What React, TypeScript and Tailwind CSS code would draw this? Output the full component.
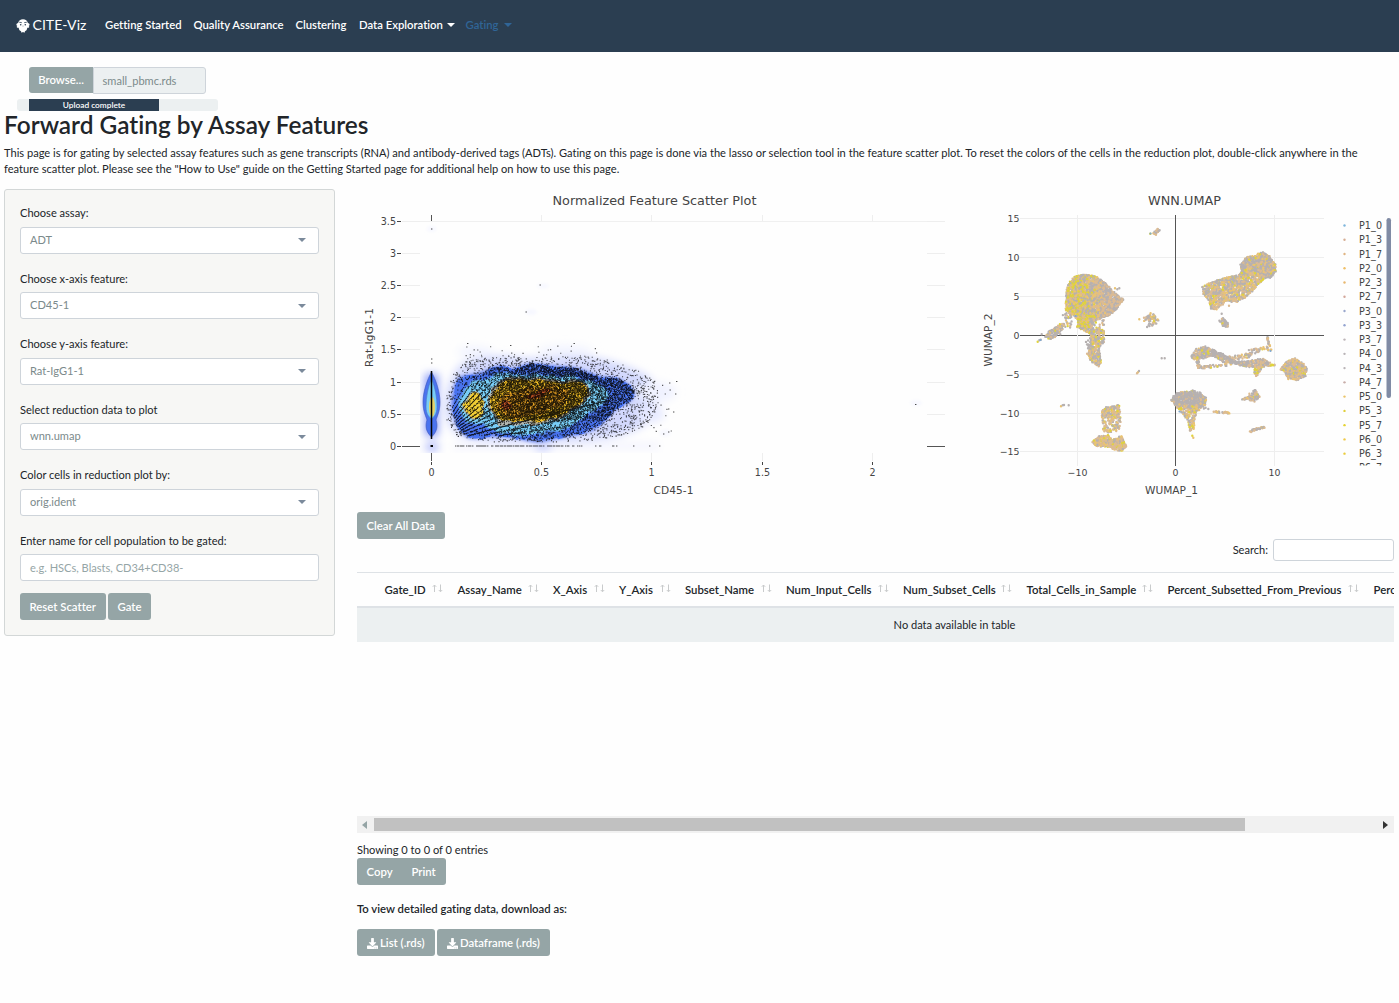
import React from 'react';
import { FaDownload } from 'react-icons/fa';

type Pt = [number, number];

function createRandom(seed: number) {
  let s = seed >>> 0;
  return () => {
    s = (s + 0x6d2b79f5) >>> 0;
    let t = s;
    t = Math.imul(t ^ (t >>> 15), t | 1);
    t ^= t + Math.imul(t ^ (t >>> 7), t | 61);
    return ((t ^ (t >>> 14)) >>> 0) / 4294967296;
  };
}

function inside(x: number, y: number, poly: Pt[]) {
  let hit = false;
  for (let i = 0, j = poly.length - 1; i < poly.length; j = i++) {
    const [xi, yi] = poly[i];
    const [xj, yj] = poly[j];
    if (yi > y !== yj > y && x < ((xj - xi) * (y - yi)) / (yj - yi) + xi) hit = !hit;
  }
  return hit;
}

function smooth(poly: Pt[]) {
  const n = poly.length;
  let d = '';
  for (let i = 0; i < n; i++) {
    const a = poly[i];
    const b = poly[(i + 1) % n];
    const mx = (a[0] + b[0]) / 2;
    const my = (a[1] + b[1]) / 2;
    d += i === 0 ? `M${mx} ${my}` : `Q${a[0]} ${a[1]} ${mx} ${my}`;
  }
  const f = poly[0];
  const g = poly[1];
  return d + `Q${f[0]} ${f[1]} ${(f[0] + g[0]) / 2} ${(f[1] + g[1]) / 2}Z`;
}

/* ---------- Feature scatter ---------- */

const HALO: Pt[] = [[446, 420], [445, 396], [452, 376], [462, 362], [480, 358], [500, 355], [530, 359], [560, 356], [590, 356], [615, 362], [636, 370], [652, 378], [658, 392], [656, 412], [646, 425], [626, 434], [600, 440], [540, 443], [490, 442], [457, 437]];
const BLUE: Pt[] = [[452, 412], [453, 394], [458, 377], [472, 376], [488, 371], [500, 365], [512, 371], [530, 363], [550, 367], [575, 368], [588, 373], [600, 378], [618, 378], [634, 390], [633, 399], [614, 409], [606, 419], [594, 430], [572, 435], [556, 438], [535, 442], [518, 437], [490, 435], [470, 439], [460, 430]];
const SKY: Pt[] = [[460, 412], [462, 394], [470, 382], [486, 380], [504, 374], [530, 375], [552, 375], [578, 378], [592, 383], [606, 389], [607, 398], [594, 408], [582, 418], [566, 428], [545, 432], [528, 436], [510, 432], [494, 433], [484, 423], [476, 425], [466, 422]];
const YELLOW_A: Pt[] = [[464, 410], [467, 398], [475, 391], [483, 398], [484, 410], [479, 419], [470, 419]];
const YELLOW_B: Pt[] = [[487, 404], [492, 391], [504, 379], [516, 378], [532, 380], [560, 382], [580, 381], [591, 391], [583, 403], [570, 413], [550, 422], [530, 423], [508, 422], [496, 420]];
const ORANGE: Pt[] = [[494, 405], [504, 395], [530, 386], [556, 385], [572, 391], [566, 401], [548, 412], [524, 418], [504, 416]];

function scatterDots() {
  const r = createRandom(71);
  const parts: string[] = [];
  const gray: string[] = [];
  const put = (x: number, y: number, w = 1) =>
    parts.push(`M${(Math.round(x * 3) / 3).toFixed(2)} ${(Math.round(y * 3) / 3).toFixed(2)}h${w}`);
  const ox = 431.5;
  const oy = 446;
  const rays = [0.16, 0.215, 0.285, 0.37, 0.46, 0.55, 0.64, 0.74, 0.85, 0.97, 1.1, 1.25, 1.42, 1.65, 1.9];
  // Counts ratio rays: solid near the origin, dissolving to the right.
  rays.forEach((k, i) => {
    const strong = k === 0.285;
    const start = k < 0.17 ? 495 : k < 0.25 ? 484 : strong ? 467 : 448;
    const end = strong ? 608 : k < 0.25 ? 585 : 560 - i * 4;
    for (let x = start; x < end; x += 0.5) {
      const y = oy - k * (x - ox) * (1 - (x - ox) / 1800);
      if (!inside(x, y, BLUE) && (!inside(x, y, HALO) || r() > 0.15)) continue;
      const gone = (x - 450) / (end - 440);
      if (r() > 0.95 - gone * (strong ? 0.1 : 0.6)) continue;
      // Fewer counts at the top left leave the streaks broken.
      if (y < 384 && r() < 0.45) continue;
      put(x, y + (r() - 0.5) * (strong ? 0.9 : 0.6 + gone));
    }
  });
  // Interior scatter, tightening towards the centre.
  let n = 0;
  while (n < 10800) {
    const x = 450 + r() * 186;
    const y = 362 + r() * 80;
    if (!inside(x, y, BLUE)) continue;
    const t = Math.min(1, Math.max(0, (x - 466) / 58));
    const upper = Math.min(1, Math.max(0, (396 - y) / 26));
    const lower = y > 420 ? 0.5 : 1;
    const core = inside(x, y, YELLOW_B) ? 1 : 0.6;
    n += 0.5;
    if (r() > (0.05 + 0.95 * t) * core * lower + upper * 0.2) continue;
    put(x, y);
    n += 0.5;
  }
  // Fringe around the cloud.
  n = 0;
  while (n < 820) {
    const x = 446 + r() * 212;
    const y = 352 + r() * 90;
    if (!inside(x, y, HALO) || inside(x, y, BLUE)) continue;
    gray.push(`M${x.toFixed(1)} ${y.toFixed(1)}h1.1`);
    n++;
  }
  for (let i = 0; i < 70; i++) {
    const x = 600 + Math.pow(r(), 1.3) * 74;
    const y = 378 + r() * 54;
    gray.push(`M${x.toFixed(1)} ${y.toFixed(1)}h1.1`);
  }
  for (let i = 0; i < 50; i++) {
    gray.push(`M${(458 + r() * 140).toFixed(1)} ${(346 + r() * 18).toFixed(1)}h1.1`);
  }
  for (let i = 0; i < 125; i++) {
    const x = 454 + Math.round(r() * (r() < 0.8 ? 130 : 165));
    gray.push(`M${x} 446h1.4`);
  }
  const lone: Pt[] = [[431, 229], [539.5, 285], [525.5, 312], [431, 359], [431, 363], [467, 343.5], [510, 345.5], [573.5, 343.5], [653, 383], [669, 383], [676, 381.5], [675, 394], [669.5, 390], [673, 412], [668, 409], [654, 412], [915, 404.5], [663, 434], [668, 432], [659, 446], [649, 446], [633, 446]];
  lone.forEach(([x, y]) => gray.push(`M${x} ${y}h1.4`));
  return { black: parts.join(''), gray: gray.join('') };
}

const DOTS = scatterDots();

const PLOT_FONT = "font-['DejaVu_Sans',Verdana,sans-serif]";

function ScatterPlot() {
  const ys = ['3.5', '3', '2.5', '2', '1.5', '1', '0.5', '0'];
  const xs = ['0', '0.5', '1', '1.5', '2'];
  return (
    <svg viewBox="357 184 620 322" width="620" height="322" className={`block shrink-0 ${PLOT_FONT}`} fill="#444">
      <defs>
        <filter id="soft" x="-20%" y="-20%" width="140%" height="140%">
          <feGaussianBlur stdDeviation="4" />
        </filter>
        <filter id="edge" x="-20%" y="-20%" width="140%" height="140%">
          <feGaussianBlur stdDeviation="1.6" />
        </filter>
        <filter id="rough" x="-10%" y="-10%" width="120%" height="120%">
          <feTurbulence type="fractalNoise" baseFrequency="0.09" numOctaves="2" seed="4" />
          <feDisplacementMap in="SourceGraphic" scale="9" xChannelSelector="R" yChannelSelector="G" />
        </filter>
        <clipPath id="heat">
          <rect x="420" y="216" width="508" height="237" />
        </clipPath>
      </defs>
      <text x="552.5" y="205" fontSize="12.8" textLength="204">Normalized Feature Scatter Plot</text>
      {ys.map((t, i) => {
        const y = Math.round(221 + i * 32.1) + 0.5;
        return (
          <g key={t}>
            <text x="396" y={y + 3.7} fontSize="9.6" textAnchor="end">{t}</text>
            <path d={`M397 ${y}h4`} stroke="#444" />
            <path d={`M402 ${y}h18M927 ${y}h18`} stroke={t === '0' ? '#555' : '#eee'} />
          </g>
        );
      })}
      <path d="M420 221.500h507" stroke="#f0f0f0" />
      {xs.map((t, i) => {
        const x = Math.round(431 + i * 110.2) + 0.5;
        return (
          <g key={t}>
            <text x={x} y="476" fontSize="9.6" textAnchor="middle">{t}</text>
            <path d={`M${x} 462v3`} stroke="#444" />
            <path d={`M${x} 215v6M${x} 453v8`} stroke={t === '0' ? '#555' : '#eee'} />
          </g>
        );
      })}
      <text x="653.5" y="493.500" fontSize="10.600" textLength="40">CD45-1</text>
      <text transform="translate(373 367) rotate(-90)" fontSize="10.600" textLength="59">Rat-IgG1-1</text>

      <g clipPath="url(#heat)">
        <g filter="url(#soft)">
          <path d={smooth(HALO)} fill="#d2d8fd" />
          <ellipse cx="656" cy="392" rx="20" ry="10" fill="#f0f2ff" />
          <ellipse cx="650" cy="414" rx="14" ry="9" fill="#e6e9ff" />
          <ellipse cx="475" cy="352" rx="18" ry="6" fill="#f2f4ff" />
          <ellipse cx="565" cy="350" rx="28" ry="5" fill="#f2f4ff" />
          <rect x="454" y="443" width="205" height="6" fill="#f2f3ff" />
          <ellipse cx="543" cy="447" rx="9" ry="4" fill="#c6cdfc" />
          <rect x="425" y="374" width="13" height="62" fill="#8798f8" />
          <ellipse cx="432" cy="447" rx="7" ry="4" fill="#a4aff9" />
        </g>
        <g fill="#f7f8ff" filter="url(#edge)">
          <ellipse cx="431.500" cy="229" rx="5" ry="3" />
          <ellipse cx="543" cy="286" rx="6" ry="2.500" />
          <ellipse cx="531" cy="312" rx="6" ry="3" />
          <ellipse cx="916" cy="403" rx="6" ry="3" />
          <ellipse cx="665" cy="433" rx="6" ry="3.500" />
        </g>
        <path d={smooth(BLUE)} fill="#4b6fee" stroke="#4b6fee" strokeWidth="3" filter="url(#edge)" opacity=".7" />
        <g filter="url(#rough)">
          <path d={smooth(BLUE)} fill="#4a73ef" />
          <path d={smooth(SKY)} fill="#5c96f2" stroke="#5c96f2" strokeWidth="3" />
          <path d={smooth(SKY)} fill="#78cdf7" stroke="#4f8fe0" strokeWidth=".4" />
          <path d={smooth(YELLOW_A)} fill="#f1cd35" stroke="#b3b29a" strokeWidth="1.400" />
          <path d={smooth(YELLOW_B)} fill="#f1bf28" stroke="#b0b0a4" strokeWidth="2.500" />
          <path d="M496 421L515 420L530 423L510 427L497 427Z" fill="#b3b7b2" />
          <path d={smooth(ORANGE)} fill="#e5a022" />
          <ellipse cx="506" cy="406" rx="5" ry="4" fill="#cf5a2a" />
          <ellipse cx="539" cy="394" rx="12" ry="3.500" fill="#cf5a25" transform="rotate(-15 539 394)" />
        </g>
        <path d="M431.500 372C427 380 423 392 423 402C423 412 426 416 427 420C425 426 426 432 431.500 437C437 432 438 426 436 420C437 416 440 412 440 402C440 392 436 380 431.500 372Z" fill="#4a73ef" stroke="#3d55b8" strokeWidth=".6" />
        <path d="M431.500 378C428 388 426 396 426 407C426 414 429 417 431.500 419C434 417 437 414 437 407C437 396 435 388 431.500 378Z" fill="#78cdf7" stroke="#4876c4" strokeWidth=".6" />
        <ellipse cx="432" cy="407" rx="3" ry="10" fill="#e5d268" />
        <path d="M431.500 371V439" stroke="#000" strokeWidth="1.500" />
        <path d={DOTS.black} stroke="#050505" strokeWidth="1" opacity=".88" />
        <path d={DOTS.gray} stroke="#111" strokeWidth="1.1" opacity=".75" />
        <path d="M430.500 446h2.500" stroke="#000" strokeWidth="2" />
      </g>
    </svg>
  );
}

/* ---------- UMAP ---------- */

interface Cluster {
  poly: Pt[];
  density: number;
  mix: (x: number, y: number) => [number, number, number, number];
}

// Weights: gray, tan, orange, yellow.
const even = (): [number, number, number, number] => [0.5, 0.26, 0.16, 0.08];

const CLUSTERS: Cluster[] = [
  { poly: [[275, 320], [283, 295], [300, 275], [325, 268], [360, 274], [385, 290], [410, 315], [443, 345], [425, 370], [400, 392], [360, 400], [350, 425], [352, 450], [330, 437], [308, 425], [308, 400], [290, 385], [273, 375]], density: 1.1,
    mix: (x) => { const t = Math.min(1, Math.max(0, (x - 310) / 90)); return [0.34 + 0.22 * t, 0.2 + 0.24 * t, 0.16 - 0.04 * t, 0.3 - 0.27 * t]; } },
  { poly: [[400, 392], [385, 425], [350, 445], [360, 400]], density: 0.2, mix: even },
  { poly: [[345, 440], [372, 430], [387, 440], [385, 470], [370, 490], [378, 530], [370, 543], [350, 530], [338, 505], [348, 490], [350, 460]], density: 0.8, mix: () => [0.45, 0.28, 0.15, 0.12] },
  { poly: [[330, 470], [348, 455], [350, 500], [338, 500]], density: 0.3, mix: () => [0.75, 0.1, 0.05, 0.1] },
  { poly: [[268, 392], [290, 388], [290, 430], [268, 430]], density: 0.22, mix: () => [0.7, 0.15, 0.1, 0.05] },
  { poly: [[211, 455], [225, 437], [255, 420], [267, 417], [262, 432], [240, 455], [225, 462]], density: 0.7, mix: () => [0.6, 0.25, 0.08, 0.07] },
  { poly: [[536, 145], [548, 131], [553, 136], [542, 149]], density: 0.5, mix: () => [0.5, 0.4, 0.1, 0] },
  { poly: [[515, 392], [525, 383], [550, 392], [552, 410], [535, 422], [514, 429], [522, 415], [507, 408]], density: 0.4, mix: even },
  { poly: [[380, 680], [395, 668], [430, 662], [436, 690], [437, 720], [428, 742], [385, 742], [382, 715]], density: 0.36, mix: () => [0.38, 0.33, 0.2, 0.09] },
  { poly: [[383, 676], [395, 668], [432, 662], [434, 688], [383, 690]], density: 0.5, mix: () => [0.35, 0.35, 0.2, 0.1] },
  { poly: [[375, 755], [400, 752], [410, 765], [440, 755], [453, 783], [440, 798], [420, 792], [400, 784], [365, 784], [352, 770]], density: 1.1, mix: () => [0.18, 0.53, 0.2, 0.09] },
  { poly: [[590, 645], [605, 625], [630, 622], [655, 618], [675, 625], [692, 640], [690, 660], [670, 668], [640, 670], [600, 658]], density: 1.1, mix: () => [0.8, 0.13, 0.05, 0.02] },
  { poly: [[600, 658], [670, 665], [660, 690], [655, 730], [645, 738], [637, 700], [620, 680]], density: 0.6, mix: () => [0.34, 0.28, 0.22, 0.16] },
  { poly: [[797, 240], [815, 217], [840, 212], [865, 202], [883, 215], [900, 240], [900, 260], [885, 278], [855, 270], [800, 262]], density: 1.1, mix: () => [0.58, 0.25, 0.12, 0.05] },
  { poly: [[800, 262], [880, 270], [860, 288], [830, 318], [808, 338], [785, 350], [755, 345], [725, 372], [708, 372], [705, 350], [684, 325], [684, 305], [715, 290], [755, 277], [790, 272]], density: 0.7, mix: () => [0.44, 0.28, 0.16, 0.12] },
  { poly: [[734, 405], [745, 401], [759, 417], [757, 426], [745, 424]], density: 0.8, mix: () => [0.65, 0.2, 0.1, 0.05] },
  { poly: [[650, 513], [665, 494], [690, 485], [715, 495], [755, 515], [775, 530], [815, 530], [865, 522], [883, 535], [865, 545], [820, 545], [780, 537], [745, 530], [715, 512], [680, 520]], density: 0.75, mix: () => [0.68, 0.22, 0.07, 0.03] },
  { poly: [[840, 540], [868, 532], [852, 560], [845, 572], [838, 560]], density: 0.7, mix: () => [0.3, 0.37, 0.18, 0.15] },
  { poly: [[918, 553], [935, 530], [960, 522], [980, 534], [995, 550], [990, 572], [965, 584], [940, 580], [930, 560]], density: 1.1, mix: () => [0.46, 0.4, 0.1, 0.04] },
  { poly: [[825, 628], [845, 625], [852, 635], [840, 648], [826, 645]], density: 0.7, mix: () => [0.35, 0.35, 0.16, 0.14] },
];

const STREAKS: { line: Pt[]; n: number; spread: number }[] = [
  { line: [[652, 515], [668, 522], [670, 548], [715, 543], [765, 541]], n: 85, spread: 8 },
  { line: [[755, 520], [815, 515], [830, 500], [885, 488]], n: 80, spread: 15 },
  { line: [[877, 455], [880, 470], [887, 492]], n: 14, spread: 4 },
  { line: [[865, 538], [902, 542]], n: 16, spread: 5 },
  { line: [[800, 643], [828, 637]], n: 26, spread: 5 },
  { line: [[832, 615], [845, 625], [848, 640]], n: 12, spread: 12 },
  { line: [[715, 680], [765, 684]], n: 26, spread: 4 },
  { line: [[823, 740], [840, 733], [867, 727]], n: 36, spread: 5 },
  { line: [[645, 680], [690, 665]], n: 14, spread: 14 },
  { line: [[268, 395], [310, 380]], n: 20, spread: 16 },
];

const SINGLES: Pt[] = [[526, 146], [188, 470], [193, 466], [197, 464], [200, 448], [256, 448], [493, 403], [507, 398], [560, 520], [569, 520], [486, 565], [489, 562], [492, 558], [420, 310], [427, 313], [433, 310], [258, 664], [263, 661], [267, 660], [281, 661], [652, 752], [655, 758], [740, 386], [762, 362], [770, 350], [700, 672], [302, 398], [318, 398]];

const DOT_COLORS = ['#b6b1b1', '#dcbb93', '#e9c374', '#e0d33c'];
const LAYERS = 14;

function umapDots() {
  const r = createRandom(2024);
  const layers: string[] = Array.from({ length: LAYERS * 4 }, () => '');
  const put = (x: number, y: number, w: number[]) => {
    let k = r();
    let c = 0;
    while (c < 3 && k > w[c]) k -= w[c++];
    const slot = Math.floor(r() * LAYERS) * 4 + c;
    layers[slot] += `M${(975 + x / 3).toFixed(1)} ${(185 + y / 3).toFixed(1)}h.01`;
  };
  CLUSTERS.forEach(({ poly, density, mix }) => {
    const px = poly.map((p) => p[0]);
    const py = poly.map((p) => p[1]);
    const x0 = Math.min(...px);
    const x1 = Math.max(...px);
    const y0 = Math.min(...py);
    const y1 = Math.max(...py);
    const tries = ((x1 - x0) * (y1 - y0) * density) / 9;
    for (let i = 0; i < tries; i++) {
      const x = x0 + r() * (x1 - x0);
      const y = y0 + r() * (y1 - y0);
      if (inside(x, y, poly)) put(x, y, mix(x, y));
    }
    // Cells along the border keep the outline crisp.
    if (density > 0.45) {
      poly.forEach((a, i) => {
        const b = poly[(i + 1) % poly.length];
        const steps = Math.hypot(b[0] - a[0], b[1] - a[1]) / 6;
        for (let s = 0; s < steps; s++) {
          const t = s / steps;
          const x = a[0] + (b[0] - a[0]) * t + (r() - 0.5) * 4;
          const y = a[1] + (b[1] - a[1]) * t + (r() - 0.5) * 4;
          put(x, y, mix(x, y));
        }
      });
    }
  });
  STREAKS.forEach(({ line, n, spread }) => {
    for (let i = 0; i < n; i++) {
      const u = r() * (line.length - 1);
      const k = Math.floor(u);
      const t = u - k;
      put(
        line[k][0] + (line[k + 1][0] - line[k][0]) * t + (r() - 0.5) * spread,
        line[k][1] + (line[k + 1][1] - line[k][1]) * t + (r() - 0.5) * spread,
        even(),
      );
    }
  });
  SINGLES.forEach(([x, y]) => put(x, y, [0.5, 0.3, 0.15, 0.05]));
  return layers;
}

const UMAP = umapDots();

const LEGEND: [string, string][] = [
  ['P1_0', '#7fb6dc'], ['P1_3', '#d6ae94'], ['P1_7', '#e0b583'], ['P2_0', '#efbf66'], ['P2_3', '#e8b870'], ['P2_7', '#d3a79b'],
  ['P3_0', '#9aa8cc'], ['P3_3', '#94a4d0'], ['P3_7', '#bdb5b8'], ['P4_0', '#b9b4b7'], ['P4_3', '#b9b4b7'], ['P4_7', '#c8aeaa'],
  ['P5_0', '#eac46a'], ['P5_3', '#dfce3c'], ['P5_7', '#e5d230'], ['P6_0', '#efc94a'], ['P6_3', '#eacb3c'], ['P6_7', '#e2c44a'],
];

function UmapPlot() {
  return (
    <svg viewBox="977 184 418 322" width="418" height="322" className={`block shrink-0 ${PLOT_FONT}`} fill="#444">
      <defs>
        <clipPath id="legendClip">
          <rect x="1335" y="215" width="60" height="250.500" />
        </clipPath>
      </defs>
      <text x="1148" y="205" fontSize="12.800" textLength="73">WNN.UMAP</text>
      {['15', '10', '5', '0', '−5', '−10', '−15'].map((t, i) => {
        const y = Math.round(218.500 + i * 38.800) + (i === 0 ? -0.5 : 0.5);
        return (
          <g key={t}>
            <text x="1019.500" y={y + 3} fontSize="9.400" textAnchor="end">{t}</text>
            <path d={`M1020 ${y}h304`} stroke={t === '0' ? '#555' : '#eee'} />
          </g>
        );
      })}
      {[['−10', 1077.5], ['0', 1175.5], ['10', 1274.5]].map(([t, x]) => (
        <g key={t}>
          <text x={x} y="476" fontSize="9.400" textAnchor="middle">{t}</text>
          <path d={`M${x} 215v251`} stroke={t === '0' ? '#555' : '#eee'} />
        </g>
      ))}
      <text x="1145" y="493.500" fontSize="10.600" textLength="53">WUMAP_1</text>
      <text transform="translate(992 366.500) rotate(-90)" fontSize="10.600" textLength="53">WUMAP_2</text>
      {UMAP.map((d, i) => (
        <path key={i} d={d} stroke={DOT_COLORS[i % 4]} strokeWidth="2.400" strokeLinecap="round" />
      ))}
      <path d="M1150.500 233.500h.01M1040.500 340h.01M1179.500 411.500h.01M1075.500 316h.01M1270.500 351h.01" stroke="#7fa8d0" strokeWidth="2.200" strokeLinecap="round" />
      <g clipPath="url(#legendClip)">
        {LEGEND.map(([t, c], i) => (
          <g key={t}>
            <circle cx="1344.500" cy={225.500 + i * 14.260} r="1.200" fill={c} />
            <text x="1359" y={229 + i * 14.260} fontSize="9.600" textLength="23">{t}</text>
          </g>
        ))}
      </g>
      <rect x="1386.500" y="218" width="4.500" height="180" rx="2.200" fill="#808ba4" />
    </svg>
  );
}

/* ---------- Page ---------- */

function Caret({ className }: { className: string }) {
  return <span className={`inline-block border-x-[4px] border-t-[4px] border-x-transparent ${className}`} />;
}

function BirdLogo() {
  return (
    <svg width="14" height="14" viewBox="0 0 14 14" className="shrink-0">
      <path d="M7 .3C9.600 .3 11.400 1.700 11.900 4C12.700 4.300 13.600 4.700 13.600 5.700C13.600 6.500 13 6.800 12.600 7C13.300 7.300 13.500 8 13 8.500C12.400 9 11.800 8.800 11.300 8.800C11.200 10.800 10 12 9 12.300L8.500 13.700L7 13L5.500 13.700L5 12.300C4 12 2.800 10.800 2.700 8.800C2.200 8.800 1.600 9 1 8.500C.5 8 .7 7.300 1.400 7C1 6.800 .4 6.500 .4 5.700C.4 4.700 1.300 4.300 2.100 4C2.600 1.700 4.400 .3 7 .3Z" fill="#fff" />
      <path d="M3.200 3.200L5.800 3.700M10.800 3.200L8.200 3.700" stroke="#2b3e51" strokeWidth=".8" />
      <circle cx="4.700" cy="5.700" r=".8" fill="#2b3e51" />
      <circle cx="9.300" cy="5.700" r=".8" fill="#2b3e51" />
      <path d="M6.500 6.800h1l-.5 1z" fill="#2b3e51" />
    </svg>
  );
}

const BTN = 'flex h-[27px] items-center bg-[#95a5a6] px-[9.5px] pt-px text-[11.35px] font-semibold text-white whitespace-nowrap';

function Field({ label, value }: { label: string; value: string }) {
  return (
    <div className="h-[65.5px]">
      <div className="h-[21.500px] leading-[16px]">{label}</div>
      <div className="flex h-[27px] items-center justify-between rounded-[3px] border border-[#ced4da] bg-white pl-[9px] pr-[12px] text-[#7b8a8b]">
        <span>{value}</span>
        <Caret className="border-t-[#7b8a9b]" />
      </div>
    </div>
  );
}

const COLUMNS: [string, string][] = [
  ['Gate_ID', 'w-[73px]'], ['Assay_Name', 'w-[95.500px]'], ['X_Axis', 'w-[66px]'], ['Y_Axis', 'w-[66px]'], ['Subset_Name', 'w-[101px]'],
  ['Num_Input_Cells', 'w-[117px]'], ['Num_Subset_Cells', 'w-[123.500px]'], ['Total_Cells_in_Sample', 'w-[141px]'],
  ['Percent_Subsetted_From_Previous', 'w-[206px]'], ['Percent_Subsetted_From_Total', 'w-[180px]'],
];

function SortArrows() {
  return (
    <svg width="11" height="9" viewBox="0 0 11 9" className="mb-[5px] shrink-0" fill="none" stroke="#c9cbcc" strokeWidth="1">
      <path d="M2.500 8V1M.8 2.800L2.500 1L4.200 2.800M8.500 .5V7.500M6.800 6L8.500 7.800L10.200 6" />
    </svg>
  );
}

export default function App() {
  return (
    <div className="h-[1003px] w-[1399px] overflow-hidden bg-[#fefefe] font-[Lato,sans-serif] text-[11.07px] leading-[16.500px] text-[#212529] [font-variant-ligatures:none]">
      <nav className="flex h-[52px] items-center bg-[#2b3e51] pb-[2px] pl-[16px] text-[11.300px] font-semibold text-white">
        <span className="flex w-[89px] items-center gap-[2.500px] pt-px text-[14.100px] font-normal">
          <BirdLogo />
          CITE-Viz
        </span>
        <span className="w-[88.500px]">Getting Started</span>
        <span className="w-[102px]">Quality Assurance</span>
        <span className="w-[63.500px]">Clustering</span>
        <span className="flex w-[106.500px] items-center gap-[4px]">Data Exploration <Caret className="border-t-white" /></span>
        <span className="flex items-center gap-[5px] text-[#306597]">Gating <Caret className="border-t-[#306597]" /></span>
      </nav>

      <div className="flex pl-[29px] pt-[15px]">
        <div className="flex h-[26px] w-[64px] items-center justify-center rounded-l-[3px] bg-[#95a5a6] text-[11.350px] font-semibold text-white">Browse...</div>
        <div className="flex h-[27px] w-[113px] items-center rounded-r-[3px] border border-[#ced4da] bg-[#ecf0f1] pl-[8.500px] pt-px text-[#7b8a8b]">small_pbmc.rds</div>
      </div>
      <div className="ml-[17px] mt-[5px] flex h-[12px] w-[201px] rounded-[3px] bg-[#ecf0f1] pl-[12px]">
        <div className="h-full w-[130px] bg-[#2b3e51] text-center text-[8.300px] font-semibold leading-[12px] text-white">Upload complete</div>
      </div>

      <h2 className="ml-[4px] h-[34px] whitespace-nowrap text-[24.400px] font-semibold leading-[27px]">Forward Gating by Assay Features</h2>
      <p className="ml-[4px] h-[44px] whitespace-nowrap text-[11.100px] leading-[16px]">
        This page is for gating by selected assay features such as gene transcripts (RNA) and antibody-derived tags (ADTs). Gating on this page is done via the lasso or selection tool in the feature scatter plot. To reset the colors of the cells in the reduction plot, double-click anywhere in the<br />
        feature scatter plot. Please see the "How to Use" guide on the Getting Started page for additional help on how to use this page.
      </p>

      <div className="flex">
        <aside className="ml-[4px] h-[447px] w-[331px] rounded-[3px] border border-[#d3d7d7] bg-[#f7f7f5] px-[15px] pt-[15px]">
          <Field label="Choose assay:" value="ADT" />
          <Field label="Choose x-axis feature:" value="CD45-1" />
          <Field label="Choose y-axis feature:" value="Rat-IgG1-1" />
          <Field label="Select reduction data to plot" value="wnn.umap" />
          <Field label="Color cells in reduction plot by:" value="orig.ident" />
          <div className="h-[21.500px] leading-[16px]">Enter name for cell population to be gated:</div>
          <div className="flex h-[27px] items-center rounded-[3px] border border-[#ced4da] bg-white pl-[9px] pt-px text-[#95a5a6]">e.g. HSCs, Blasts, CD34+CD38-</div>
          <div className="mt-[12px] flex gap-[2px]">
            <div className={`${BTN} w-[86px] rounded-[3px]`}>Reset Scatter</div>
            <div className={`${BTN} w-[43px] rounded-[3px]`}>Gate</div>
          </div>
        </aside>

        <main className="-mt-[5px] ml-[22px] w-[1037px]">
          <div className="flex">
            <ScatterPlot />
            <UmapPlot />
          </div>
          <div className="mt-[6px] flex">
            <div className={`${BTN} w-[88px] rounded-[3px]`}>Clear All Data</div>
          </div>
          <div className="flex items-center justify-end gap-[5px]">
            <span>Search:</span>
            <div className="h-[22px] w-[121px] rounded-[3px] border border-[#ced4da] bg-white" />
          </div>
          <div className="mt-[11px] h-[244px] overflow-hidden">
            <div className="w-[1195px]">
              <div className="flex h-[36px] items-center border-b-2 border-t border-[#dee2e6] pl-[27.500px] pt-[2px] text-[11.360px] font-semibold">
                {COLUMNS.map(([name, width]) => (
                  <div key={name} className={`flex shrink-0 items-center justify-between pr-[14.500px] ${width}`}>
                    <span>{name}</span>
                    <SortArrows />
                  </div>
                ))}
              </div>
              <div className="flex h-[34px] items-center justify-center bg-[#ecf0f1]">No data available in table</div>
            </div>
          </div>
          <div className="flex h-[17px] items-center bg-[#f1f1f1] pl-[5px] pr-[6px]">
            <span className="mr-[7px] h-0 w-0 border-y-[4px] border-r-[5px] border-y-transparent border-r-[#95a5a6]" />
            <span className="h-[13px] w-[871px] bg-[#c1c1c1]" />
            <span className="ml-auto h-0 w-0 border-y-[4px] border-l-[5px] border-y-transparent border-l-[#333]" />
          </div>
          <div className="mt-[8px] h-[17px] pt-px">Showing 0 to 0 of 0 entries</div>
          <div className="flex">
            <div className={`${BTN} w-[45px] rounded-l-[3px]`}>Copy</div>
            <div className={`${BTN} w-[44px] rounded-r-[3px]`}>Print</div>
          </div>
          <div className="mt-[16px] text-[11.320px] font-semibold">To view detailed gating data, download as:</div>
          <div className="mt-[11.500px] flex gap-[2px]">
            <div className={`${BTN} h-[26px] w-[78px] gap-[2.500px] rounded-[3px] pt-0`}><FaDownload className="h-[11px] w-[11px]" />List (.rds)</div>
            <div className={`${BTN} h-[26px] w-[113px] gap-[2.500px] rounded-[3px] pt-0`}><FaDownload className="h-[11px] w-[11px]" />Dataframe (.rds)</div>
          </div>
        </main>
      </div>
    </div>
  );
}
